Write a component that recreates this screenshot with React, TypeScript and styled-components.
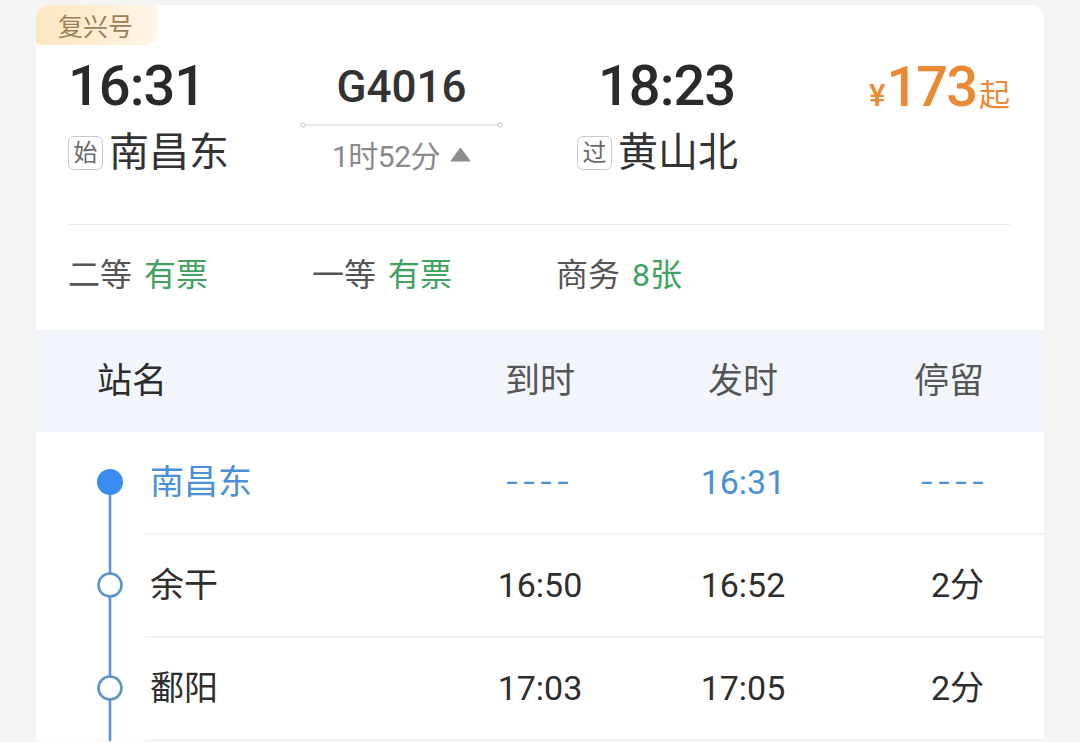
import React from "react";
import styled, { createGlobalStyle } from "styled-components";

const GlobalStyle = createGlobalStyle`
  html, body {
    margin: 0;
    padding: 0;
    background: #f4f4f5;
  }
  * { box-sizing: border-box; }
`;

const FONT = `Roboto, "Noto Sans CJK SC", "Noto Sans", sans-serif`;

const Page = styled.div`
  width: 1080px;
  height: 742px;
  overflow: hidden;
  padding: 5px 36px 0 36px;
  background: #f4f4f5;
  font-family: ${FONT};
`;

const Card = styled.section`
  background: #ffffff;
  border-radius: 14px 14px 0 0;
`;

const Badge = styled.div`
  width: 121px;
  height: 40px;
  display: flex;
  align-items: center;
  padding-left: 22px;
  border-radius: 14px 4px 12px 4px;
  background: linear-gradient(90deg, #fde6c2 0%, #fff0d9 70%, #fff6ea 100%);
  color: #9b7f57;
  font-size: 25px;
`;

const HeaderBody = styled.div`
  padding: 13px 34px 37px 32px;
`;

const TopGrid = styled.div`
  display: grid;
  grid-template-columns: 233px 201px 75px 1fr auto;
  grid-template-rows: 56px 19px 44px;
  align-items: center;
`;

const BigTime = styled.div<{ $col: number; $indent?: number }>`
  grid-row: 1;
  grid-column: ${(p) => p.$col};
  font-size: 56px;
  line-height: 56px;
  font-weight: 500;
  color: #2a2a2a;
  letter-spacing: -1px;
  padding-left: ${(p) => p.$indent ?? 0}px;
`;

const StationLine = styled.div<{ $col: number }>`
  grid-row: 3;
  grid-column: ${(p) => p.$col};
  display: flex;
  align-items: center;
  gap: 6px;
  margin-top: -4px;
`;

const StationTag = styled.span`
  width: 35px;
  height: 34px;
  border: 1.5px solid #c9c9c9;
  border-radius: 6px;
  display: inline-flex;
  align-items: center;
  justify-content: center;
  font-size: 24px;
  color: #6b6b6b;
  line-height: 1;
`;

const StationName = styled.span`
  font-size: 40px;
  line-height: 44px;
  color: #333333;
`;

const TrainNo = styled.div`
  grid-row: 1;
  grid-column: 2;
  text-align: center;
  font-size: 44px;
  line-height: 56px;
  font-weight: 500;
  color: #333333;
  padding-top: 2px;
`;

const RouteLine = styled.svg`
  grid-row: 2;
  grid-column: 2;
  display: block;
  width: 203px;
  height: 8px;
  margin-left: -1px;
  margin-top: 2px;
`;

const Duration = styled.div`
  grid-row: 3;
  grid-column: 2;
  display: flex;
  align-items: center;
  justify-content: center;
  gap: 10px;
  font-size: 30px;
  color: #8a8a8a;
  letter-spacing: -0.5px;
  margin-top: -2px;
`;

const Triangle = styled.svg`
  width: 21px;
  height: 15px;
  display: block;
`;

const Price = styled.div`
  grid-row: 1;
  grid-column: 5;
  display: flex;
  align-items: baseline;
  color: #eb8a34;
  padding-top: 2px;
`;

const Yen = styled.span`
  font-size: 31px;
  font-weight: 500;
  margin-right: 1px;
`;

const PriceNum = styled.span`
  font-size: 56px;
  line-height: 56px;
  font-weight: 500;
  letter-spacing: -2px;
`;

const PriceSuffix = styled.span`
  font-size: 31px;
  margin-left: 3px;
`;

const Divider = styled.div`
  margin-top: 47px;
  height: 1px;
  background: #ebebeb;
`;

const SeatRow = styled.div`
  margin-top: 32px;
  display: grid;
  grid-template-columns: 244px 244px auto;
  font-size: 32px;
  line-height: 36px;
`;

const Seat = styled.div`
  display: flex;
  gap: 12px;
`;

const SeatLabel = styled.span`
  color: #555555;
`;

const SeatValue = styled.span`
  color: #3fa25f;
`;

const Table = styled.section`
  background: #ffffff;
`;

const TableHead = styled.div`
  height: 102px;
  background: #f2f6fc;
  display: grid;
  grid-template-columns: 341px 204px 202px 1fr;
  align-items: center;
  padding: 0 60px 8px 61px;
  font-size: 35px;
  color: #555555;
`;

const HeadCell = styled.div<{ $align: "left" | "center" | "right"; $strong?: boolean }>`
  text-align: ${(p) => p.$align};
  color: ${(p) => (p.$strong ? "#2c2c2c" : "#555555")};
`;

const Row = styled.div`
  display: flex;
  height: 103px;
`;

const TimelineCell = styled.svg`
  width: 109px;
  height: 103px;
  flex-shrink: 0;
  display: block;
`;

const RowBody = styled.div`
  flex: 1;
  display: grid;
  grid-template-columns: 288px 204px 202px 1fr;
  align-items: center;
  padding: 0 60px 2px 5px;
  border-bottom: 2px solid #f3f3f3;
`;

const Cell = styled.div<{ $align: "left" | "center" | "right"; $active?: boolean; $dash?: boolean }>`
  text-align: ${(p) => p.$align};
  font-size: ${(p) => (p.$dash ? "42px" : "34px")};
  line-height: 40px;
  color: ${(p) => (p.$active ? "#4a90d4" : "#2e2e2e")};
  letter-spacing: ${(p) => (p.$dash ? "5px" : "0px")};
  margin-right: ${(p) => (p.$dash && p.$align === "right" ? "-5px" : "0px")};
  font-weight: ${(p) => (p.$dash ? 300 : 400)};
`;

type Stop = {
  name: string;
  arrive: string;
  depart: string;
  stay: string;
  first?: boolean;
};

const stops: Stop[] = [
  { name: "南昌东", arrive: "----", depart: "16:31", stay: "----", first: true },
  { name: "余干", arrive: "16:50", depart: "16:52", stay: "2分" },
  { name: "鄱阳", arrive: "17:03", depart: "17:05", stay: "2分" },
];

function Timeline({ first }: { first?: boolean }) {
  return (
    <TimelineCell viewBox="0 0 109 103">
      <line
        x1="74"
        x2="74"
        y1={first ? 50 : 0}
        y2="103"
        stroke="#5b96cf"
        strokeWidth="2.6"
      />
      {first ? (
        <circle cx="74" cy="50" r="13" fill="#3a8df0" />
      ) : (
        <circle cx="74" cy="50" r="11.5" fill="#ffffff" stroke="#5a95ca" strokeWidth="2.6" />
      )}
    </TimelineCell>
  );
}

export default function App() {
  return (
    <>
      <GlobalStyle />
      <Page>
        <Card>
          <Badge>复兴号</Badge>
          <HeaderBody>
            <TopGrid>
              <BigTime $col={1}>16:31</BigTime>
              <TrainNo>G4016</TrainNo>
              <RouteLine viewBox="0 0 203 8">
                <line x1="4" x2="199" y1="4" y2="4" stroke="#cfcfcf" strokeWidth="1.2" />
                <circle cx="3" cy="4" r="2.2" fill="#fff" stroke="#c8c8c8" strokeWidth="1" />
                <circle cx="200" cy="4" r="2.2" fill="#fff" stroke="#c8c8c8" strokeWidth="1" />
              </RouteLine>
              <BigTime $col={4} $indent={21}>18:23</BigTime>
              <Price>
                <Yen>¥</Yen>
                <PriceNum>173</PriceNum>
                <PriceSuffix>起</PriceSuffix>
              </Price>
              <StationLine $col={1}>
                <StationTag>始</StationTag>
                <StationName>南昌东</StationName>
              </StationLine>
              <Duration>
                <span>1时52分</span>
                <Triangle viewBox="0 0 21 15">
                  <polygon points="10.5,1 20,14 1,14" fill="#8c8c8c" strokeLinejoin="round" stroke="#8c8c8c" strokeWidth="1" />
                </Triangle>
              </Duration>
              <StationLine $col={4}>
                <StationTag>过</StationTag>
                <StationName>黄山北</StationName>
              </StationLine>
            </TopGrid>
            <Divider />
            <SeatRow>
              <Seat>
                <SeatLabel>二等</SeatLabel>
                <SeatValue>有票</SeatValue>
              </Seat>
              <Seat>
                <SeatLabel>一等</SeatLabel>
                <SeatValue>有票</SeatValue>
              </Seat>
              <Seat>
                <SeatLabel>商务</SeatLabel>
                <SeatValue>8张</SeatValue>
              </Seat>
            </SeatRow>
          </HeaderBody>
        </Card>
        <Table>
          <TableHead>
            <HeadCell $align="left" $strong>站名</HeadCell>
            <HeadCell $align="center">到时</HeadCell>
            <HeadCell $align="center">发时</HeadCell>
            <HeadCell $align="right">停留</HeadCell>
          </TableHead>
          {stops.map((s) => (
            <Row key={s.name}>
              <Timeline first={s.first} />
              <RowBody>
                <Cell $align="left" $active={s.first}>{s.name}</Cell>
                <Cell $align="center" $active={s.first} $dash={s.arrive === "----"}>
                  {s.arrive}
                </Cell>
                <Cell $align="center" $active={s.first}>{s.depart}</Cell>
                <Cell $align="right" $active={s.first} $dash={s.stay === "----"}>
                  {s.stay}
                </Cell>
              </RowBody>
            </Row>
          ))}
        </Table>
      </Page>
    </>
  );
}
